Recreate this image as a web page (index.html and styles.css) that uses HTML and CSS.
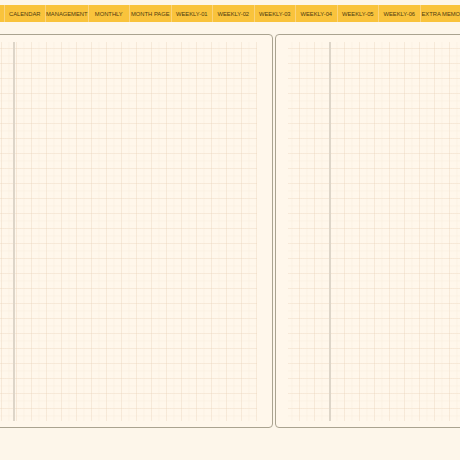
FILE: index.html
```
<!DOCTYPE html>
<html>
<head>
<meta charset="utf-8">
<link rel="stylesheet" href="styles.css">
</head>
<body>
<nav class="tabs">
  <div class="tab">CALENDAR</div>
  <div class="tab">MANAGEMENT</div>
  <div class="tab">MONTHLY</div>
  <div class="tab">MONTH PAGE</div>
  <div class="tab">WEEKLY-01</div>
  <div class="tab">WEEKLY-02</div>
  <div class="tab">WEEKLY-03</div>
  <div class="tab">WEEKLY-04</div>
  <div class="tab">WEEKLY-05</div>
  <div class="tab">WEEKLY-06</div>
  <div class="tab">EXTRA MEMO</div>
</nav>
<main class="spread">
  <section class="page page-left">
    <div class="grid grid-left"><div class="rule rule-left"></div></div>
  </section>
  <section class="page page-right">
    <div class="grid grid-right"><div class="rule rule-right"></div></div>
  </section>
</main>
</body>
</html>
```
FILE: styles.css
```
html, body {
  margin: 0;
  padding: 0;
  background: #fdf6ea;
  width: 460px;
  height: 460px;
  overflow: hidden;
}
.tabs {
  margin-top: 5px;
  height: 17px;
  background: #f9c33c;
  display: flex;
  padding-left: 3.5px;
  font-family: "Liberation Sans", Arial, sans-serif;
  font-size: 5.8px;
  color: #4f3c10;
}
.tab {
  flex: 0 0 41.5px;
  display: flex;
  align-items: center;
  justify-content: center;
  border-left: 0.6px solid #fbd37a;
  box-sizing: border-box;
  white-space: nowrap;
}
.spread {
  margin-top: 12px;
  display: flex;
  gap: 2px;
  margin-left: -20px;
}
.page {
  flex: 0 0 auto;
  height: 394px;
  box-sizing: border-box;
  border: 1.5px solid #aaa390;
  border-radius: 4px;
  background: #fff7eb;
  padding-top: 6.5px;
}
.page-left {
  width: 292.5px;
  padding-right: 14.5px;
}
.page-right {
  width: 220px;
  padding-left: 12.5px;
}
.grid {
  height: 379px;
  display: flex;
  background-image:
    linear-gradient(to right, rgba(236, 214, 190, 0.3) 1px, transparent 1px),
    linear-gradient(to bottom, rgba(236, 214, 190, 0.3) 1px, transparent 1px),
    linear-gradient(to right, rgba(242, 226, 206, 0.25) 1px, transparent 1px),
    linear-gradient(to bottom, rgba(242, 226, 206, 0.25) 1px, transparent 1px);
  background-size: 15px 15px, 15px 15px, 7.5px 7.5px, 7.5px 7.5px;
}
.grid-left {
  background-position: 5px 6px, 5px 6px, 5px 6px, 5px 6px;
}
.grid-right {
  background-position: 11px 6px, 11px 6px, 11px 6px, 11px 6px;
}
.rule {
  width: 2px;
  height: 100%;
  background: #ddd5c8;
}
.rule-left {
  margin-left: 31.5px;
}
.rule-right {
  margin-left: 41px;
}
```
